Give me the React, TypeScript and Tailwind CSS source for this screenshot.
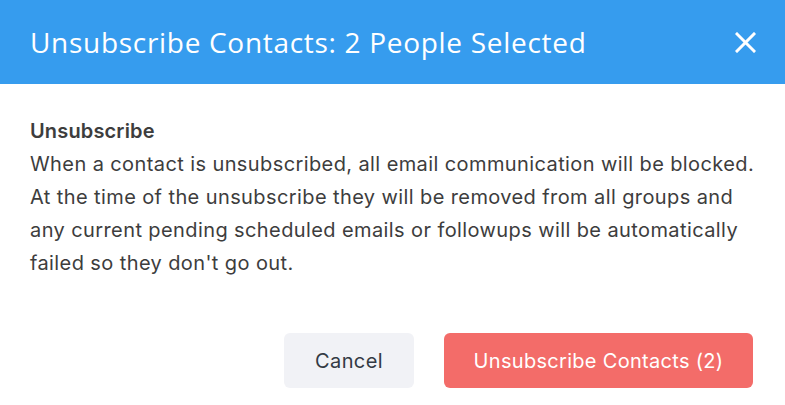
import React from 'react';

export default function App() {
  return (
    <div className="w-[785px] h-[405px] bg-white flex flex-col" style={{ fontFamily: 'Inter, "Noto Sans", sans-serif' }}>
      <div className="h-[84px] bg-[#369cee] flex items-center justify-between pl-[30px] pr-[29px]">
        <h1 className="text-[28px] text-white font-normal tracking-[0.7px]" style={{ fontFamily: '"Open Sans", sans-serif' }}>
          Unsubscribe Contacts: 2 People Selected
        </h1>
        <button className="w-[21px] h-[21px] text-white">
          <svg viewBox="0 0 21 21" width="21" height="21" fill="none" stroke="currentColor" strokeWidth="3" strokeLinecap="square">
            <path d="M2 2L19 19M19 2L2 19" />
          </svg>
        </button>
      </div>

      <div className="px-[30px] pt-[31px] text-[20px] leading-[33px] tracking-[0.4px] text-[#3d3d3d] whitespace-nowrap">
        <p className="font-semibold tracking-[0.15px]">Unsubscribe</p>
        <p>
          When a contact is unsubscribed, all email communication will be blocked.
          <br />
          At the time of the unsubscribe they will be removed from all groups and
          <br />
          any current pending scheduled emails or followups will be automatically
          <br />
          failed so they don't go out.
        </p>
      </div>

      <div className="flex justify-end gap-[30px] pr-[32px] mt-auto mb-[17px]">
        <button className="w-[130px] h-[55px] rounded-[6px] bg-[#f1f2f6] text-[20px] tracking-[0.4px] text-[#333a44]">
          Cancel
        </button>
        <button className="w-[309px] h-[55px] rounded-[6px] bg-[#f36c69] text-[20px] tracking-[0.3px] text-white">
          Unsubscribe Contacts (2)
        </button>
      </div>
    </div>
  );
}
